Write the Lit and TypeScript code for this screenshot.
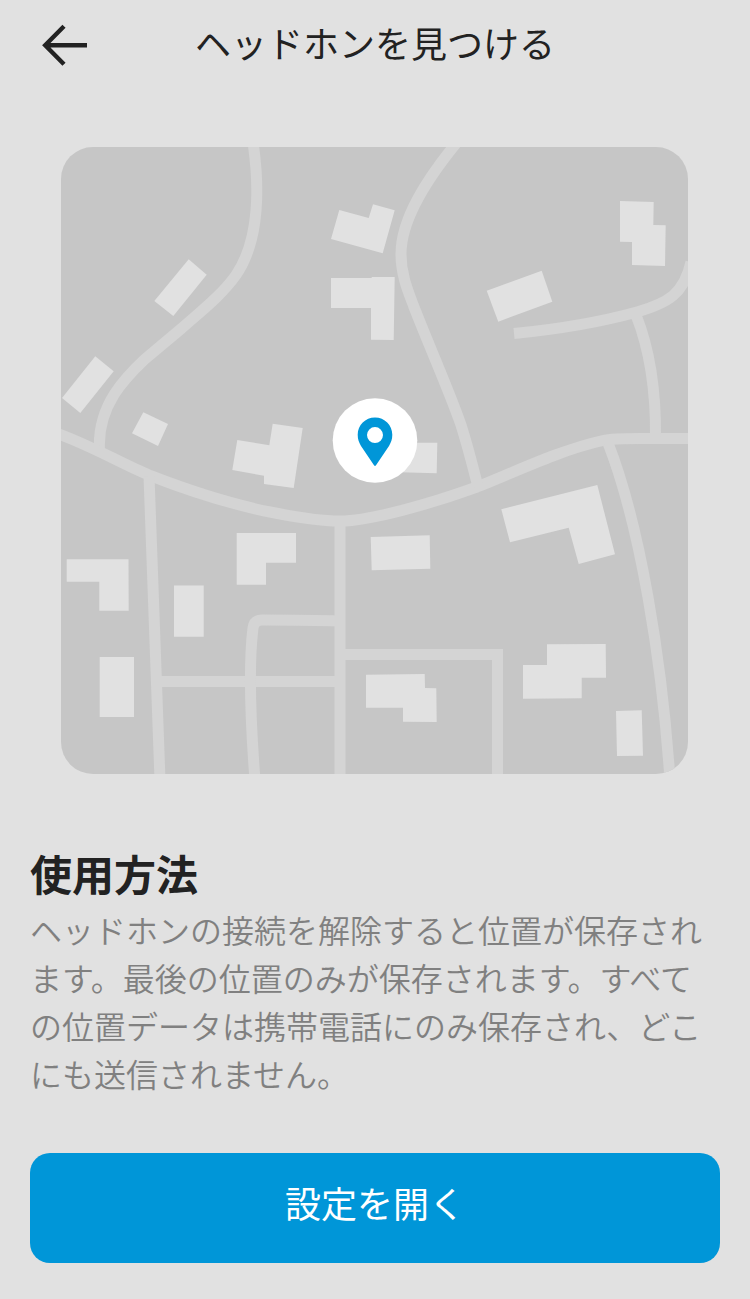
import { LitElement, html, svg, css } from "lit";
import { customElement } from "lit/decorators.js";

const ROADS: string[] = [
  "M252 136C260 185 260 240 236 275C222 295 200 312 182 328L145 359C126 377 97 405 99.500 450",
  "M50 431C85 442 120 463 150 475.500C190 491 230 504 270 512C300 518 320 521 340 521C370 521 430 504 477 487C515 472 560 450 603 440.500C612 438.500 620 438.500 640 438.500H696",
  "M463 135C425 180 401 220 401 254C401 275 408 291 414 307C430 348 450 393 461 425C468 447 473 467 478 487",
  "M514 333.500C550 330 597 323 637 312C668 303 684 294 691 262",
  "M636 315C650 350 656 390 655.500 438",
  "M608 443C640 525 662 660 670 780",
  "M149 476L160 780",
  "M158 681.500H340",
  "M340 621C310 620 285 620 262 620Q254 620 253 628C249 660 250 715 255 780",
  "M340 521V780",
  "M340 654.500H497.500V780",
];

const BUILDINGS: string[] = [
  "188.700,259.300 206.700,274.700 173.300,316 154.300,301",
  "95.300,356.300 113.700,371.300 80.300,413 62,398",
  "143.300,412.300 168,424 158,446 132,433.300",
  "339.300,210 368.700,218 373,204.300 394.700,210.300 382.700,253.300 331,239",
  "331,278 371.700,278 371.700,277 394.700,277 393.700,340 371,339.700 371,308 331,308",
  "237.300,440 269.300,445.300 272.700,423.700 302.700,428 293.700,488 264,484 264,475.700 232.300,470",
  "400,442.700 437.300,442.700 436.700,473.300 400,472.300",
  "620,201 653.700,202 653.300,225 665.700,225.300 665,266 632,265 632,242 620,241.700",
  "486.700,290.700 541.700,270.700 552.300,301.700 498.300,321.700",
  "66.700,559.300 128.500,559.300 128.700,610.700 99.300,610.700 99.300,581.700 66.700,581.700",
  "99.700,657 134,657 134,717 99.700,717",
  "174,585.500 203.700,585.500 203.700,636.700 174,636.700",
  "236.700,533 296,533 296,562.700 266,562.700 266,584.700 236.700,584.700",
  "370.700,537 429.700,535.300 430.300,568.700 371.700,570.300",
  "366,674.700 424.700,674 425,688 436.300,688.300 436.700,722 403,721.700 403,707.700 366,707.700",
  "501.300,509.300 597.300,485 615,554.300 578.700,564 568.700,527.700 510,542.300",
  "547,644.300 605.700,644 606,677.700 581.700,677.700 581.700,698.300 523,698.700 523,665 547,665",
  "616,711 641.700,710.300 643,755.700 617,756",
];

@customElement("location-map")
export class LocationMap extends LitElement {
  static styles = css`
    :host {
      display: block;
      overflow: hidden;
      border-radius: 32px;
      background: #c6c6c6;
    }
    .map {
      display: block;
      width: 100%;
      height: auto;
    }
    .road {
      fill: none;
      stroke: #d4d4d4;
      stroke-width: 11;
    }
    .building {
      fill: #e1e1e1;
    }
    .disc {
      fill: #fff;
    }
    .pin {
      fill: #0096d8;
      fill-rule: evenodd;
    }
  `;

  render() {
    return html`
      <svg class="map" viewBox="61 147 627 627" aria-hidden="true">
        ${ROADS.map((d) => svg`<path class="road" d=${d}></path>`)}
        ${BUILDINGS.map((p) => svg`<polygon class="building" points=${p}></polygon>`)}
        <circle class="disc" cx="375" cy="440.500" r="42.300"></circle>
        <path
          class="pin"
          d="M375 417.500C365.400 417.500 357.700 425.200 357.700 434.800C357.700 439.300 358.900 442.500 361 446L374 465.300Q375 466.500 376 465.300L389 446C391.100 442.500 392.300 439.300 392.300 434.800C392.300 425.200 384.600 417.500 375 417.500ZM375 427.100A8 8 0 1 1 375 443.100A8 8 0 1 1 375 427.100Z"
        ></path>
      </svg>
    `;
  }
}

@customElement("app-root")
export class AppRoot extends LitElement {
  static styles = css`
    :host {
      display: flex;
      flex-direction: column;
      box-sizing: border-box;
      min-height: 100vh;
      background: #e1e1e1;
      color: #222;
      font-family: "Noto Sans CJK JP", "Noto Sans", sans-serif;
    }
    .header {
      display: grid;
      grid-template-columns: 60px 1fr 60px;
      align-items: center;
      height: 90px;
      padding: 0 36px;
    }
    .back {
      display: flex;
      align-items: center;
      justify-content: center;
      width: 60px;
      height: 60px;
      padding: 0;
      border: 0;
      background: none;
      color: inherit;
      cursor: pointer;
    }
    .arrow {
      width: 48px;
      height: 44px;
      fill: none;
      stroke: currentColor;
      stroke-width: 4.400;
    }
    .title {
      margin: 0;
      padding-bottom: 6px;
      font-size: 36px;
      line-height: 54px;
      font-weight: 400;
      text-align: center;
      white-space: nowrap;
    }
    .figure {
      padding: 57px 62px 0 61px;
    }
    .content {
      padding: 67px 30px 0;
    }
    .heading {
      margin: 0;
      font-size: 42px;
      line-height: 64px;
      font-weight: 700;
    }
    .text {
      margin: 0;
      font-size: 32px;
      line-height: 48px;
      font-weight: 350;
      color: #808080;
    }
    .actions {
      padding: 56px 30px 36px;
    }
    .open {
      display: block;
      width: 100%;
      height: 110px;
      padding: 0 0 12px;
      border: 0;
      border-radius: 20px;
      background: #0096d8;
      color: #fff;
      font: inherit;
      font-size: 36px;
      line-height: 54px;
      cursor: pointer;
    }
  `;

  render() {
    return html`
      <header class="header">
        <button class="back" type="button" aria-label="戻る">
          <svg class="arrow" viewBox="0 0 48 44" aria-hidden="true">
            <path d="M22 3.200L3.200 22.200L22 41.200M3.200 22.200H45"></path>
          </svg>
        </button>
        <h1 class="title">ヘッドホンを見つける</h1>
      </header>
      <main>
        <div class="figure"><location-map></location-map></div>
        <section class="content">
          <h2 class="heading">使用方法</h2>
          <p class="text">ヘッドホンの接続を解除すると位置が保存されます。最後の位置のみが保存されます。すべての位置データは携帯電話にのみ保存され、どこにも送信されません。</p>
        </section>
        <div class="actions">
          <button class="open" type="button">設定を開く</button>
        </div>
      </main>
    `;
  }
}
